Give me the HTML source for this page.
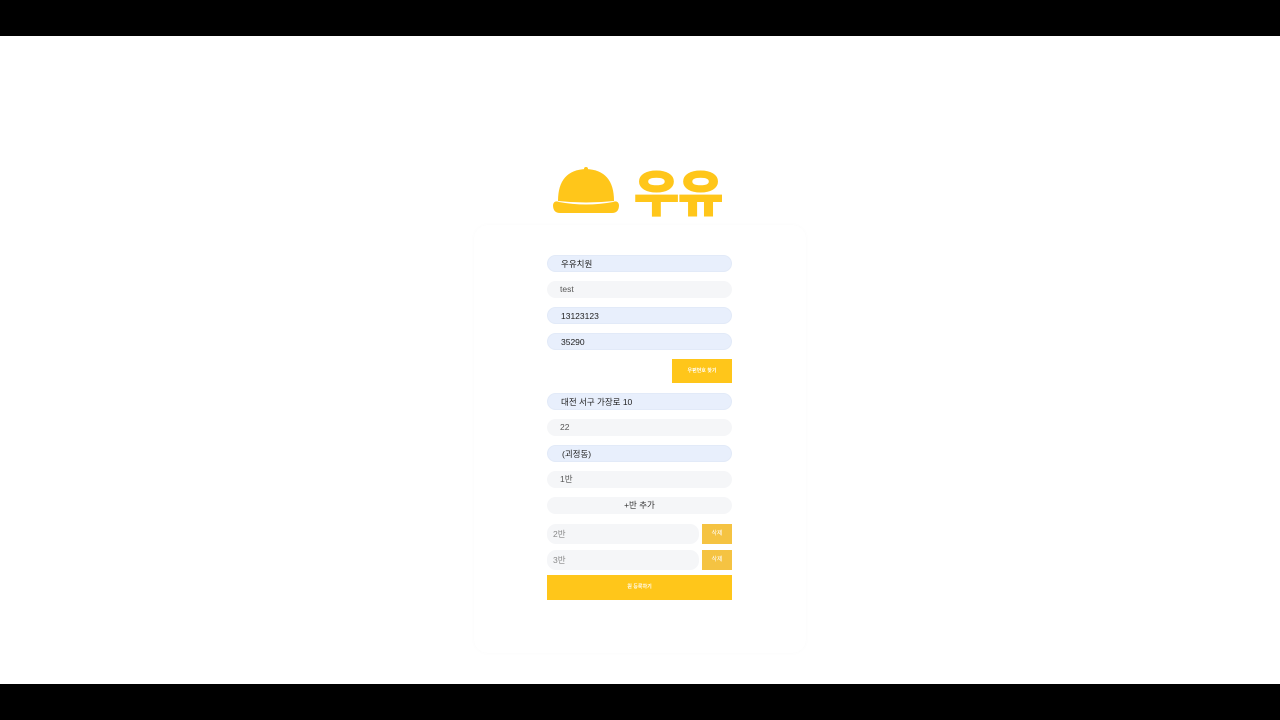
<!DOCTYPE html><html><head><meta charset="utf-8"><style>
*{margin:0;padding:0;box-sizing:border-box}
body{width:1280px;height:720px;background:#fff;position:relative;overflow:hidden;font-family:"Liberation Sans","Noto Sans CJK KR",sans-serif}
.bar{position:absolute;left:0;width:1280px;background:#000}
.card{position:absolute;left:474px;top:225px;width:332px;height:428px;border-radius:14px;box-shadow:0 0 4px rgba(0,0,0,0.025)}
.f{position:absolute;left:547px;width:185px;height:17px;border-radius:9px;font-size:8.5px;line-height:17px;padding-left:13px;color:#222}
.b{background:#e8effc;border:1px solid #e2eaf8}
.g{background:#f5f6f8;color:#555}
.btn{position:absolute;background:#ffc61a;color:#fff;font-size:5px;font-weight:bold;text-align:center}
.del{position:absolute;left:702px;width:30px;height:20px;background:#f5c342;color:#fff;font-size:6px;line-height:20px;text-align:center}
</style></head><body>
<div class="bar" style="top:0;height:36px"></div>
<div class="bar" style="top:684px;height:36px"></div>
<div class="card"></div>
<svg style="position:absolute;left:549px;top:166px" width="74" height="50" viewBox="0 0 74 50">
<path d="M9 35 Q9 4 37 3 Q65 4 65 35 Q37 38 9 35 Z" fill="#ffc61a"/>
<rect x="35" y="1" width="4" height="4" rx="2" fill="#ffc61a"/>
<path d="M4 39 Q5 34 10 36 Q37 41 64 36 Q69 34 70 39 Q70 47 63 47 L11 47 Q4 47 4 39 Z" fill="#ffc61a"/>
</svg>
<div style="position:absolute;left:634px;top:155px;font-size:49px;font-weight:900;color:#ffc61a;-webkit-text-stroke:1px #ffc61a;font-family:'Noto Sans CJK KR',sans-serif;letter-spacing:-1px">우유</div>
<div class="f b" style="top:255px">우유치원</div>
<div class="f g" style="top:281px">test</div>
<div class="f b" style="top:307px">13123123</div>
<div class="f b" style="top:333px">35290</div>
<div class="btn" style="left:672px;top:359px;width:60px;height:24px;line-height:24px">우편번호 찾기</div>
<div class="f b" style="top:393px">대전 서구 가장로 10</div>
<div class="f g" style="top:419px">22</div>
<div class="f b" style="top:445px;padding-left:14px">(괴정동)</div>
<div class="f g" style="top:471px">1반</div>
<div class="f g" style="top:497px;text-align:center;padding:0;color:#333">+반 추가</div>
<div class="f g" style="top:524px;width:152px;height:20px;line-height:20px;padding-left:6px;color:#888">2반</div>
<div class="del" style="top:524px">삭제</div>
<div class="f g" style="top:550px;width:152px;height:20px;line-height:20px;padding-left:6px;color:#888">3반</div>
<div class="del" style="top:550px">삭제</div>
<div class="btn" style="left:547px;top:575px;width:185px;height:25px;line-height:25px">원 등록하기</div>
</body></html>
